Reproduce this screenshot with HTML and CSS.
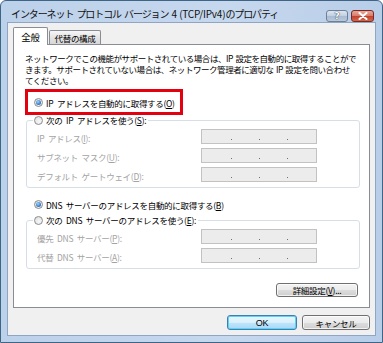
FILE: index.html
```html
<!DOCTYPE html>
<html lang="ja">
<head>
<meta charset="utf-8">
<title>IPv4 のプロパティ</title>
<link rel="stylesheet" href="styles.css">
</head>
<body>
<div class="window">
  <div class="titlebar">
    <span class="title">インターネット プロトコル バージョン 4 <span class="latin">(TCP/IPv4)</span>のプロパティ</span>
    <div class="tbtns">
      <span class="tb help">?</span>
      <span class="tb close"><svg width="10" height="8" viewBox="0 0 10 8"><path d="M1.5 1 L8.5 7 M8.5 1 L1.5 7" stroke="#fff" stroke-width="2" stroke-linecap="round"/></svg></span>
    </div>
  </div>
  <div class="client">
    <div class="tabs">
      <span class="tab active">全般</span>
      <span class="tab">代替の構成</span>
    </div>
    <div class="panel">
      <p class="desc">ネットワークでこの機能がサポートされている場合は、IP 設定を自動的に取得することがで<br>きます。サポートされていない場合は、ネットワーク管理者に適切な IP 設定を問い合わせ<br>てください。</p>
      <div class="hl">
        <span class="radio"><span class="dot on"></span><span>IP アドレスを自動的に取得する(<u>O</u>)</span></span>
      </div>
      <fieldset class="group g1">
        <legend><span class="radio"><span class="dot"></span><span>次の IP アドレスを使う(<u>S</u>):</span></span></legend>
        <div class="row"><span class="lbl">IP アドレス(<u>I</u>):</span><span class="ip"><i></i><i></i><i></i></span></div>
        <div class="row"><span class="lbl">サブネット マスク(<u>U</u>):</span><span class="ip"><i></i><i></i><i></i></span></div>
        <div class="row"><span class="lbl">デフォルト ゲートウェイ(<u>D</u>):</span><span class="ip"><i></i><i></i><i></i></span></div>
      </fieldset>
      <div class="dnsauto">
        <span class="radio"><span class="dot on"></span><span>DNS サーバーのアドレスを自動的に取得する(<u>B</u>)</span></span>
      </div>
      <fieldset class="group g2">
        <legend><span class="radio"><span class="dot"></span><span>次の DNS サーバーのアドレスを使う(<u>E</u>):</span></span></legend>
        <div class="row"><span class="lbl">優先 DNS サーバー(<u>P</u>):</span><span class="ip"><i></i><i></i><i></i></span></div>
        <div class="row"><span class="lbl">代替 DNS サーバー(<u>A</u>):</span><span class="ip"><i></i><i></i><i></i></span></div>
      </fieldset>
      <div class="advrow"><span class="btn adv">詳細設定(<u>V</u>)...</span></div>
    </div>
    <div class="footer">
      <span class="btn ok">OK</span>
      <span class="btn cancel">キャンセル</span>
    </div>
  </div>
</div>
</body>
</html>
```
FILE: styles.css
```css
* { box-sizing: border-box; }
html, body { margin: 0; padding: 0; }
body {
  width: 383px; height: 343px; overflow: hidden;
  font-family: "Noto Sans CJK JP", "Noto Sans", sans-serif;
  font-size: 8.5px; color: #000; background: #fff;
  word-spacing: 2px;
}
.window {
  width: 383px; height: 343px;
  display: flex; flex-direction: column;
  background: linear-gradient(90deg, #bcd1ea, #c6d8ee 60%, #b8cde8);
  border: 1px solid #3f6586;
  border-radius: 6px 6px 0 0;
  padding: 0 6px 6px 6px;
}
.titlebar {
  height: 21px; flex: none;
  display: flex; align-items: center; justify-content: space-between;
  padding: 3px 2px 0 4px;
}
.title { font-size: 10px; letter-spacing: -1.1px; word-spacing: 2px; color: #111; white-space: nowrap; }
.title .latin { letter-spacing: -0.2px; }
.tbtns { display: flex; gap: 3px; align-self: flex-start; margin-top: 6px; }
.tb {
  height: 12px; border-radius: 3px;
  display: flex; align-items: center; justify-content: center;
}
.help {
  width: 22px; border: 1px solid #6d8098;
  background: linear-gradient(#dde6f1, #c3d0e0 50%, #a9bbd1 51%, #b9c9dc);
  color: #fff; font: bold 9px "DejaVu Sans", sans-serif;
  text-shadow: 0 0 1px #2c3e55, 0 0 1px #2c3e55;
}
.close {
  width: 23px; border: 1px solid #7a2a22;
  background: linear-gradient(#e9a89b, #d87a68 50%, #c2402e 51%, #d06a4c);
}
.client {
  flex: 1; display: flex; flex-direction: column;
  background: #f0f0f0;
  border: 1px solid #8ea6c4;
  padding: 4px 5px 5px 5px;
}
.tabs { display: flex; align-items: flex-end; height: 17px; flex: none; gap: 1px; }
.tab {
  height: 14px; width: 52px;
  display: flex; align-items: center; justify-content: center;
  border: 1px solid #898c95; border-bottom: none;
  border-radius: 2px 2px 0 0;
  background: linear-gradient(#f6f6f6, #e4e4e4 50%, #d7d7d7);
  white-space: nowrap; letter-spacing: -0.3px;
}
.tab.active {
  height: 18px; width: 35px; margin-bottom: -1px;
  position: relative; z-index: 1;
  background: #fff; font-size: 9.5px;
}
.panel {
  flex: 1;
  background: #fff;
  border: 1px solid #898c95;
  padding: 8px 10px 0 11px;
  display: flex; flex-direction: column;
}
.desc {
  margin: 0; line-height: 11px; white-space: nowrap;
  letter-spacing: -0.45px; word-spacing: 1px;
}
.hl {
  margin-top: 3px; width: 158px;
  border: 3px solid #e3000f;
  padding: 4px 0 3px 6px;
}
.radio { display: flex; align-items: center; gap: 3px; height: 13px; white-space: nowrap; letter-spacing: -0.3px; }
.dot {
  width: 9px; height: 9px; border-radius: 50%; flex: none;
  border: 1px solid #8c8c8c;
  background: radial-gradient(circle at 60% 65%, #f8f8f8, #dcdcdc);
  display: flex; align-items: center; justify-content: center;
}
.dot.on::after {
  content: ""; width: 5px; height: 5px; border-radius: 50%;
  background: radial-gradient(circle at 40% 35%, #9fd4ff, #2a70c0 70%, #1a4f98);
}
.group {
  margin: 0 0 0 1px; width: 334px;
  border: 1px solid #d5dfe5; border-radius: 3px;
  padding: 3px 10px 5px 10px;
  display: flex; flex-direction: column; gap: 4px;
}
.group legend { padding: 0 2px 0 1px; margin-left: -4px; line-height: 11px; }
.group legend .radio { height: 11px; }
.g2 { margin-top: 4px; }
.row { display: flex; align-items: center; height: 15px; }
.lbl { width: 164px; color: #a3a3a3; white-space: nowrap; letter-spacing: -0.3px; padding-top: 2px; }
.ip {
  width: 116px; height: 15px;
  border: 1px solid #c2c2c2;
  background: #ececec;
  display: flex; justify-content: center; gap: 27px;
  align-items: flex-end; padding-bottom: 3px;
}
.ip i { width: 1px; height: 1px; background: #707070; }
.dnsauto { margin: 10px 0 0 9px; }
.advrow { display: flex; justify-content: flex-end; margin-top: 14px; padding-right: 1px; }
.btn {
  height: 14px;
  display: flex; align-items: center; justify-content: center;
  border: 1px solid #707070; border-radius: 3px;
  background: linear-gradient(#f3f3f3, #ebebeb 50%, #dddddd 51%, #cfcfcf);
  box-shadow: inset 0 0 0 1px rgba(255,255,255,0.7);
  white-space: nowrap; letter-spacing: -0.3px;
}
.adv { width: 82px; }
.footer { display: flex; justify-content: flex-end; gap: 5px; margin-top: 7px; height: 15px; flex: none; }
.footer .btn { height: 15px; }
.ok {
  width: 70px; border-color: #3c7fb1;
  background: linear-gradient(#eaf6fd, #d9f0fc 50%, #bee6fd 51%, #a7d9f5);
  box-shadow: inset 0 0 0 1px #5fd1f7;
  font-family: "Liberation Sans", sans-serif; font-size: 9px;
}
.cancel { width: 68px; }
```
